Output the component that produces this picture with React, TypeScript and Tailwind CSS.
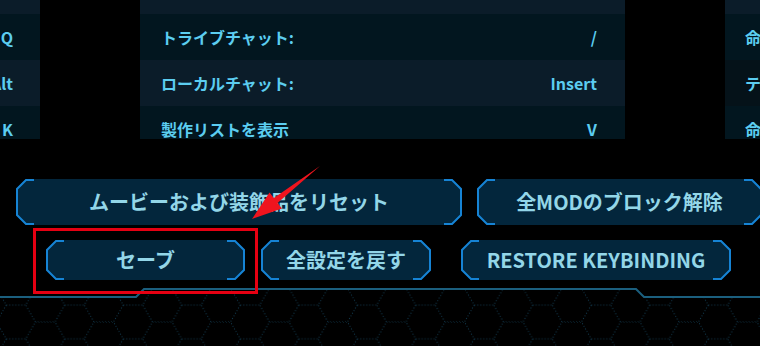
import React from "react";

const font = "font-['Noto_Sans_CJK_JP','Noto_Sans',sans-serif] font-bold";

type Row = { label: string; key: string };

const midRows: Row[] = [
  { label: "トライブチャット:", key: "/" },
  { label: "ローカルチャット:", key: "Insert" },
  { label: "製作リストを表示", key: "V" },
];

const rowBg = ["bg-[#02161f]", "bg-[#0b1c29]", "bg-[#02161f]"];

function HudButton({ w, h, label }: { w: number; h: number; label: string }) {
  const c = 10;
  const fill = `${c},0 ${w - c},0 ${w},${c} ${w},${h - c} ${w - c},${h} ${c},${h} 0,${h - c} 0,${c}`;
  const left = `${c + 8},1 ${c},1 1,${c} 1,${h - c} ${c},${h - 1} ${c + 8},${h - 1}`;
  const right = `${w - c - 8},1 ${w - c},1 ${w - 1},${c} ${w - 1},${h - c} ${w - c},${h - 1} ${w - c - 8},${h - 1}`;
  return (
    <div className="relative flex shrink-0 items-center justify-center" style={{ width: w, height: h }}>
      <svg className="absolute inset-0" width={w} height={h}>
        <polygon points={fill} fill="#03263c" />
        <polyline points={left} fill="none" stroke="#1683d4" strokeWidth="2" />
        <polyline points={right} fill="none" stroke="#1683d4" strokeWidth="2" />
      </svg>
      <span className={`relative whitespace-nowrap text-[20px] leading-none text-[#93d6e8] ${font}`}>{label}</span>
    </div>
  );
}

export default function App() {
  return (
    <div className="relative flex h-[346px] w-[760px] flex-col overflow-hidden bg-black">
      {/* Listas de teclas */}
      <div className="flex h-[139px] shrink-0 gap-[100px] overflow-hidden">
        <div className="flex w-[40px] shrink-0 flex-col">
          <div className="h-[14px] shrink-0 bg-[#0b1c29]" />
          {["Q", "Alt", "K"].map((k, i) => (
            <div key={k} className={`flex h-[46px] shrink-0 items-center justify-end pr-[27px] ${rowBg[i]}`}>
              <span className={`whitespace-nowrap text-[16px] text-[#5ccdf0] ${font}`}>{k}</span>
            </div>
          ))}
        </div>

        <div className="flex w-[485px] shrink-0 flex-col">
          <div className="h-[14px] shrink-0 bg-[#0b1c29]" />
          {midRows.map((r, i) => (
            <div key={r.label} className={`flex h-[46px] shrink-0 items-center justify-between pl-[21px] pr-[28px] ${rowBg[i]}`}>
              <span className={`text-[16px] text-[#5ccdf0] ${font}`}>{r.label}</span>
              <span className={`text-[16px] text-[#5ccdf0] ${font}`}>{r.key}</span>
            </div>
          ))}
        </div>

        <div className="flex w-[200px] shrink-0 flex-col">
          <div className="h-[14px] shrink-0 bg-[#0b1c29]" />
          {["命令チャット:", "テキストチャット:", "命令リスト"].map((t, i) => (
            <div
              key={t}
              className={`flex h-[46px] shrink-0 items-center pl-[20px] ${i === 1 ? "bg-[#051219]" : rowBg[i]}`}
            >
              <span className={`whitespace-nowrap text-[16px] text-[#5ccdf0] ${font}`}>{t}</span>
            </div>
          ))}
        </div>
      </div>

      {/* Botones */}
      <div className="mt-[40px] flex gap-[15px] pl-[16px]">
        <HudButton w={446} h={46} label="ムービーおよび装飾品をリセット" />
        <HudButton w={285} h={46} label="全MODのブロック解除" />
      </div>
      <div className="mt-[15px] flex pl-[46px]">
        <HudButton w={199} h={40} label="セーブ" />
        <div className="ml-[16px]">
          <HudButton w={170} h={40} label="全設定を戻す" />
        </div>
        <div className="ml-[30px]">
          <HudButton w={270} h={40} label="RESTORE KEYBINDING" />
        </div>
      </div>

      {/* Pie con rejilla hexagonal */}
      <div className="flex-1">
        <svg width="760" height="66" className="block">
          <defs>
            <pattern id="hex" width="58.5" height="33.77" patternUnits="userSpaceOnUse" x="25.75" y="8.2">
              <path
                d="M9.75 0 L29.25 0 L39 16.885 L29.25 33.77 L9.75 33.77 L0 16.885 Z M39 16.885 L58.5 16.885"
                fill="none"
                stroke="#113a4f"
                strokeWidth="1"
                strokeDasharray="1 2"
              />
            </pattern>
            <clipPath id="below">
              <polygon points="0,18 136,18 144,10 636,10 644,18 760,18 760,66 0,66" />
            </clipPath>
          </defs>
          <rect width="760" height="66" fill="url(#hex)" clipPath="url(#below)" />
          <polyline
            points="0,17 136,17 144,9 636,9 644,17 760,17"
            fill="none"
            stroke="#1b5f7e"
            strokeWidth="2"
          />
        </svg>
      </div>

      {/* Marca roja */}
      <div className="absolute left-[33px] top-[228px] h-[66px] w-[225px] border-[3px] border-[#e60012]" />
      <svg className="absolute left-0 top-0" width="760" height="346">
        <polygon
          points="320,166 277.5,202.9 282,208.5 252,219 269.5,192.6 273.9,198.1"
          fill="#f0141e"
        />
      </svg>
    </div>
  );
}
